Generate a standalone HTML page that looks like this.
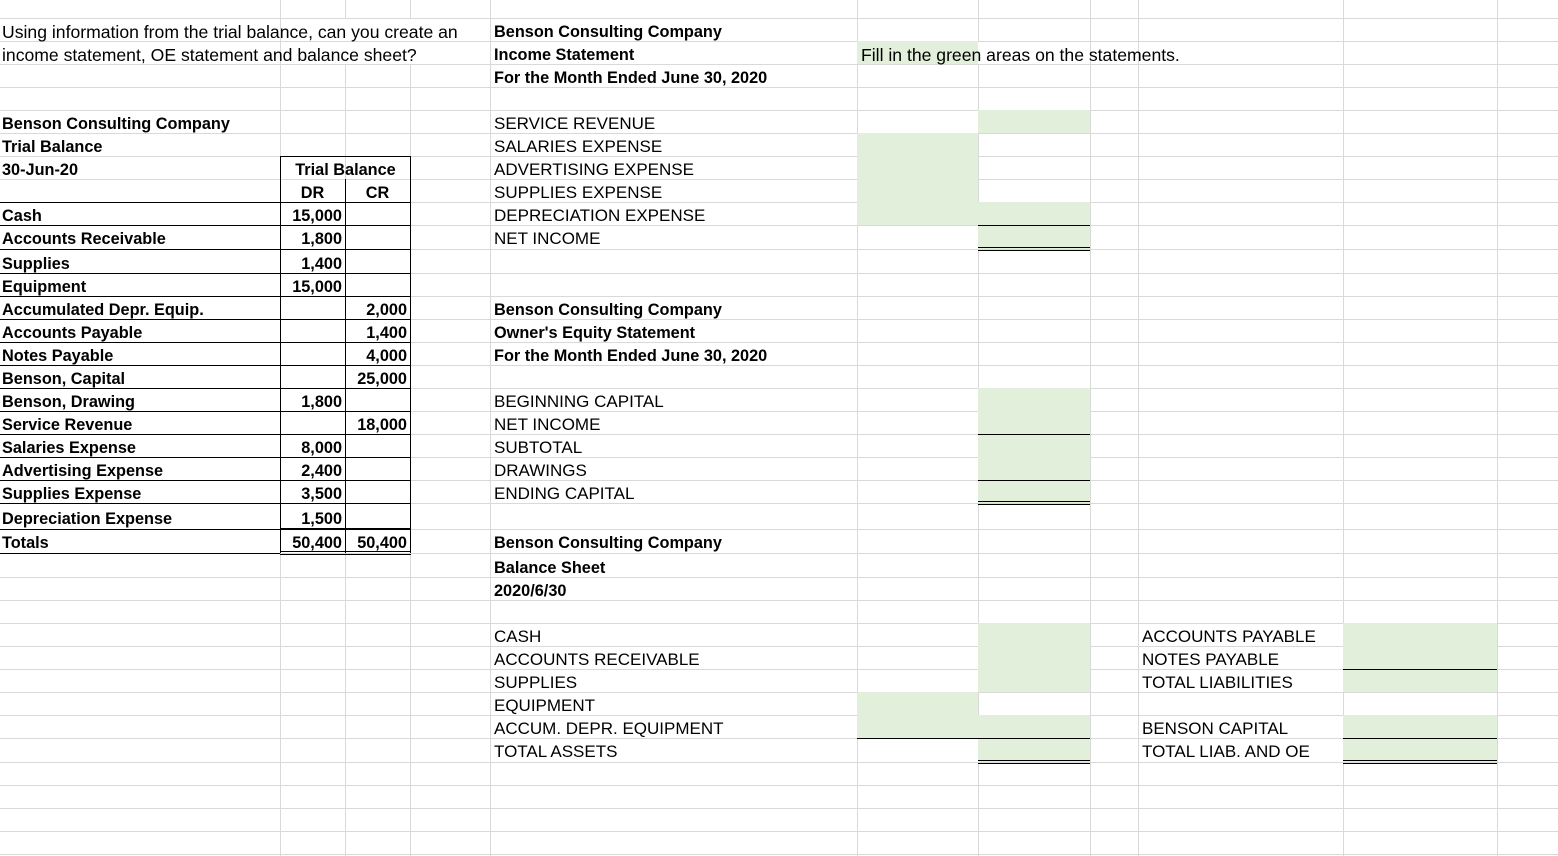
<!DOCTYPE html>
<html><head><meta charset="utf-8"><style>
body{margin:0;width:1558px;height:856px;background:#fff;position:relative;overflow:hidden;font-family:"Liberation Sans","Noto Sans CJK SC",sans-serif;color:#000}
.h{position:absolute;left:0;width:1558px;height:1px;background:#d9d9d9}
.v{position:absolute;top:0;height:856px;width:1px;background:#d9d9d9}
.g{position:absolute;background:#e2efda}
.k{position:absolute;background:#000;height:1px}
.kv{position:absolute;background:#000;width:1px}
.d{position:absolute;height:4px;border-top:1px solid #000;border-bottom:1px solid #000;box-sizing:border-box}
.t{position:absolute;white-space:nowrap;height:23px;line-height:28px;font-size:16px}
.b{font-weight:bold;font-size:16.3px}
.r{text-align:right}
.u{font-size:17px}
.p{font-size:17.6px}
</style></head><body>
<div class="v" style="left:280px"></div><div class="v" style="left:345px"></div><div class="v" style="left:410px"></div><div class="v" style="left:490px"></div><div class="v" style="left:857px"></div><div class="v" style="left:978px"></div><div class="v" style="left:1090px"></div><div class="v" style="left:1138px"></div><div class="v" style="left:1343px"></div><div class="v" style="left:1497px"></div>
<div class="h" style="top:18px"></div><div class="h" style="top:41px"></div><div class="h" style="top:64px"></div><div class="h" style="top:87px"></div><div class="h" style="top:110px"></div><div class="h" style="top:133px"></div><div class="h" style="top:156px"></div><div class="h" style="top:179px"></div><div class="h" style="top:202px"></div><div class="h" style="top:225px"></div><div class="h" style="top:249px"></div><div class="h" style="top:273px"></div><div class="h" style="top:296px"></div><div class="h" style="top:319px"></div><div class="h" style="top:342px"></div><div class="h" style="top:365px"></div><div class="h" style="top:388px"></div><div class="h" style="top:411px"></div><div class="h" style="top:434px"></div><div class="h" style="top:457px"></div><div class="h" style="top:480px"></div><div class="h" style="top:503px"></div><div class="h" style="top:529px"></div><div class="h" style="top:553px"></div><div class="h" style="top:577px"></div><div class="h" style="top:600px"></div><div class="h" style="top:623px"></div><div class="h" style="top:646px"></div><div class="h" style="top:669px"></div><div class="h" style="top:692px"></div><div class="h" style="top:715px"></div><div class="h" style="top:738px"></div><div class="h" style="top:762px"></div><div class="h" style="top:785px"></div><div class="h" style="top:808px"></div><div class="h" style="top:831px"></div><div class="h" style="top:854px"></div>
<div style="position:absolute;left:281px;top:19px;width:209px;height:22px;background:#fff"></div>
<div style="position:absolute;left:281px;top:42px;width:209px;height:22px;background:#fff"></div>
<div style="position:absolute;left:858px;top:42px;width:231px;height:22px;background:#fff"></div>
<div class="g" style="left:857px;top:41px;width:121px;height:23px"></div>
<div class="g" style="left:978px;top:110px;width:112px;height:23px"></div>
<div class="g" style="left:857px;top:133px;width:121px;height:92px"></div>
<div class="g" style="left:978px;top:202px;width:112px;height:47px"></div>
<div class="g" style="left:978px;top:388px;width:112px;height:115px"></div>
<div class="g" style="left:978px;top:623px;width:112px;height:69px"></div>
<div class="g" style="left:857px;top:692px;width:121px;height:46px"></div>
<div class="g" style="left:978px;top:715px;width:112px;height:47px"></div>
<div class="g" style="left:1343px;top:623px;width:154px;height:69px"></div>
<div class="g" style="left:1343px;top:715px;width:154px;height:47px"></div>
<div class="k" style="left:978px;top:225px;width:112px"></div>
<div class="d" style="left:978px;top:247px;width:112px"></div>
<div class="k" style="left:978px;top:434px;width:112px"></div>
<div class="k" style="left:978px;top:480px;width:112px"></div>
<div class="d" style="left:978px;top:501px;width:112px"></div>
<div class="k" style="left:857px;top:738px;width:233px"></div>
<div class="d" style="left:978px;top:760px;width:112px"></div>
<div class="k" style="left:1343px;top:669px;width:154px"></div>
<div class="k" style="left:1343px;top:738px;width:154px"></div>
<div class="d" style="left:1343px;top:760px;width:154px"></div>
<div class="k" style="left:280px;top:156px;width:131px"></div>
<div class="k" style="left:0;top:202px;width:411px"></div><div class="k" style="left:0;top:225px;width:411px"></div><div class="k" style="left:0;top:249px;width:411px"></div><div class="k" style="left:0;top:273px;width:411px"></div><div class="k" style="left:0;top:296px;width:411px"></div><div class="k" style="left:0;top:319px;width:411px"></div><div class="k" style="left:0;top:342px;width:411px"></div><div class="k" style="left:0;top:365px;width:411px"></div><div class="k" style="left:0;top:388px;width:411px"></div><div class="k" style="left:0;top:411px;width:411px"></div><div class="k" style="left:0;top:434px;width:411px"></div><div class="k" style="left:0;top:457px;width:411px"></div><div class="k" style="left:0;top:480px;width:411px"></div><div class="k" style="left:0;top:503px;width:411px"></div>
<div class="k" style="left:0;top:529px;width:280px"></div>
<div class="k" style="left:280px;top:528px;width:131px;height:2px"></div>
<div class="k" style="left:0;top:553px;width:280px"></div>
<div class="d" style="left:280px;top:551px;width:131px"></div>
<div class="kv" style="left:280px;top:156px;height:397px"></div>
<div class="kv" style="left:345px;top:179px;height:374px"></div>
<div class="kv" style="left:410px;top:156px;height:397px"></div>
<div class="t p" style="left:2px;top:18px">Using information from the trial balance, can you create an</div>
<div class="t p" style="left:2px;top:41px">income statement, OE statement and balance sheet?</div>
<div class="t p" style="left:861px;top:41px">Fill in the green areas on the statements.</div>
<div class="t b" style="left:494px;top:18px">Benson Consulting Company</div>
<div class="t b" style="left:494px;top:41px">Income Statement</div>
<div class="t b" style="left:494px;top:64px">For the Month Ended June 30, 2020</div>
<div class="t b" style="left:2px;top:110px">Benson Consulting Company</div>
<div class="t b" style="left:2px;top:133px">Trial Balance</div>
<div class="t b" style="left:2px;top:156px">30-Jun-20</div>
<div class="t b" style="left:280px;top:156px;width:131px;text-align:center">Trial Balance</div>
<div class="t b" style="left:280px;top:179px;width:65px;text-align:center">DR</div>
<div class="t b" style="left:345px;top:179px;width:65px;text-align:center">CR</div>
<div class="t b" style="left:2px;top:202px">Cash</div><div class="t b r" style="left:280px;width:62px;top:202px">15,000</div>
<div class="t b" style="left:2px;top:225px">Accounts Receivable</div><div class="t b r" style="left:280px;width:62px;top:225px">1,800</div>
<div class="t b" style="left:2px;top:250px">Supplies</div><div class="t b r" style="left:280px;width:62px;top:250px">1,400</div>
<div class="t b" style="left:2px;top:273px">Equipment</div><div class="t b r" style="left:280px;width:62px;top:273px">15,000</div>
<div class="t b" style="left:2px;top:296px">Accumulated Depr. Equip.</div><div class="t b r" style="left:345px;width:62px;top:296px">2,000</div>
<div class="t b" style="left:2px;top:319px">Accounts Payable</div><div class="t b r" style="left:345px;width:62px;top:319px">1,400</div>
<div class="t b" style="left:2px;top:342px">Notes Payable</div><div class="t b r" style="left:345px;width:62px;top:342px">4,000</div>
<div class="t b" style="left:2px;top:365px">Benson, Capital</div><div class="t b r" style="left:345px;width:62px;top:365px">25,000</div>
<div class="t b" style="left:2px;top:388px">Benson, Drawing</div><div class="t b r" style="left:280px;width:62px;top:388px">1,800</div>
<div class="t b" style="left:2px;top:411px">Service Revenue</div><div class="t b r" style="left:345px;width:62px;top:411px">18,000</div>
<div class="t b" style="left:2px;top:434px">Salaries Expense</div><div class="t b r" style="left:280px;width:62px;top:434px">8,000</div>
<div class="t b" style="left:2px;top:457px">Advertising Expense</div><div class="t b r" style="left:280px;width:62px;top:457px">2,400</div>
<div class="t b" style="left:2px;top:480px">Supplies Expense</div><div class="t b r" style="left:280px;width:62px;top:480px">3,500</div>
<div class="t b" style="left:2px;top:505px">Depreciation Expense</div><div class="t b r" style="left:280px;width:62px;top:505px">1,500</div>
<div class="t b" style="left:2px;top:529px">Totals</div><div class="t b r" style="left:280px;width:62px;top:529px">50,400</div><div class="t b r" style="left:345px;width:62px;top:529px">50,400</div>
<div class="t u" style="left:494px;top:110px">SERVICE REVENUE</div>
<div class="t u" style="left:494px;top:133px">SALARIES EXPENSE</div>
<div class="t u" style="left:494px;top:156px">ADVERTISING EXPENSE</div>
<div class="t u" style="left:494px;top:179px">SUPPLIES EXPENSE</div>
<div class="t u" style="left:494px;top:202px">DEPRECIATION EXPENSE</div>
<div class="t u" style="left:494px;top:225px">NET INCOME</div>
<div class="t b" style="left:494px;top:296px">Benson Consulting Company</div>
<div class="t b" style="left:494px;top:319px">Owner's Equity Statement</div>
<div class="t b" style="left:494px;top:342px">For the Month Ended June 30, 2020</div>
<div class="t u" style="left:494px;top:388px">BEGINNING CAPITAL</div>
<div class="t u" style="left:494px;top:411px">NET INCOME</div>
<div class="t u" style="left:494px;top:434px">SUBTOTAL</div>
<div class="t u" style="left:494px;top:457px">DRAWINGS</div>
<div class="t u" style="left:494px;top:480px">ENDING CAPITAL</div>
<div class="t b" style="left:494px;top:529px">Benson Consulting Company</div>
<div class="t b" style="left:494px;top:554px">Balance Sheet</div>
<div class="t b" style="left:494px;top:577px">2020/6/30</div>
<div class="t u" style="left:494px;top:623px">CASH</div>
<div class="t u" style="left:494px;top:646px">ACCOUNTS RECEIVABLE</div>
<div class="t u" style="left:494px;top:669px">SUPPLIES</div>
<div class="t u" style="left:494px;top:692px">EQUIPMENT</div>
<div class="t u" style="left:494px;top:715px">ACCUM. DEPR. EQUIPMENT</div>
<div class="t u" style="left:494px;top:738px">TOTAL ASSETS</div>
<div class="t u" style="left:1142px;top:623px">ACCOUNTS PAYABLE</div>
<div class="t u" style="left:1142px;top:646px">NOTES PAYABLE</div>
<div class="t u" style="left:1142px;top:669px">TOTAL LIABILITIES</div>
<div class="t u" style="left:1142px;top:715px">BENSON CAPITAL</div>
<div class="t u" style="left:1142px;top:738px">TOTAL LIAB. AND OE</div>
</body></html>
